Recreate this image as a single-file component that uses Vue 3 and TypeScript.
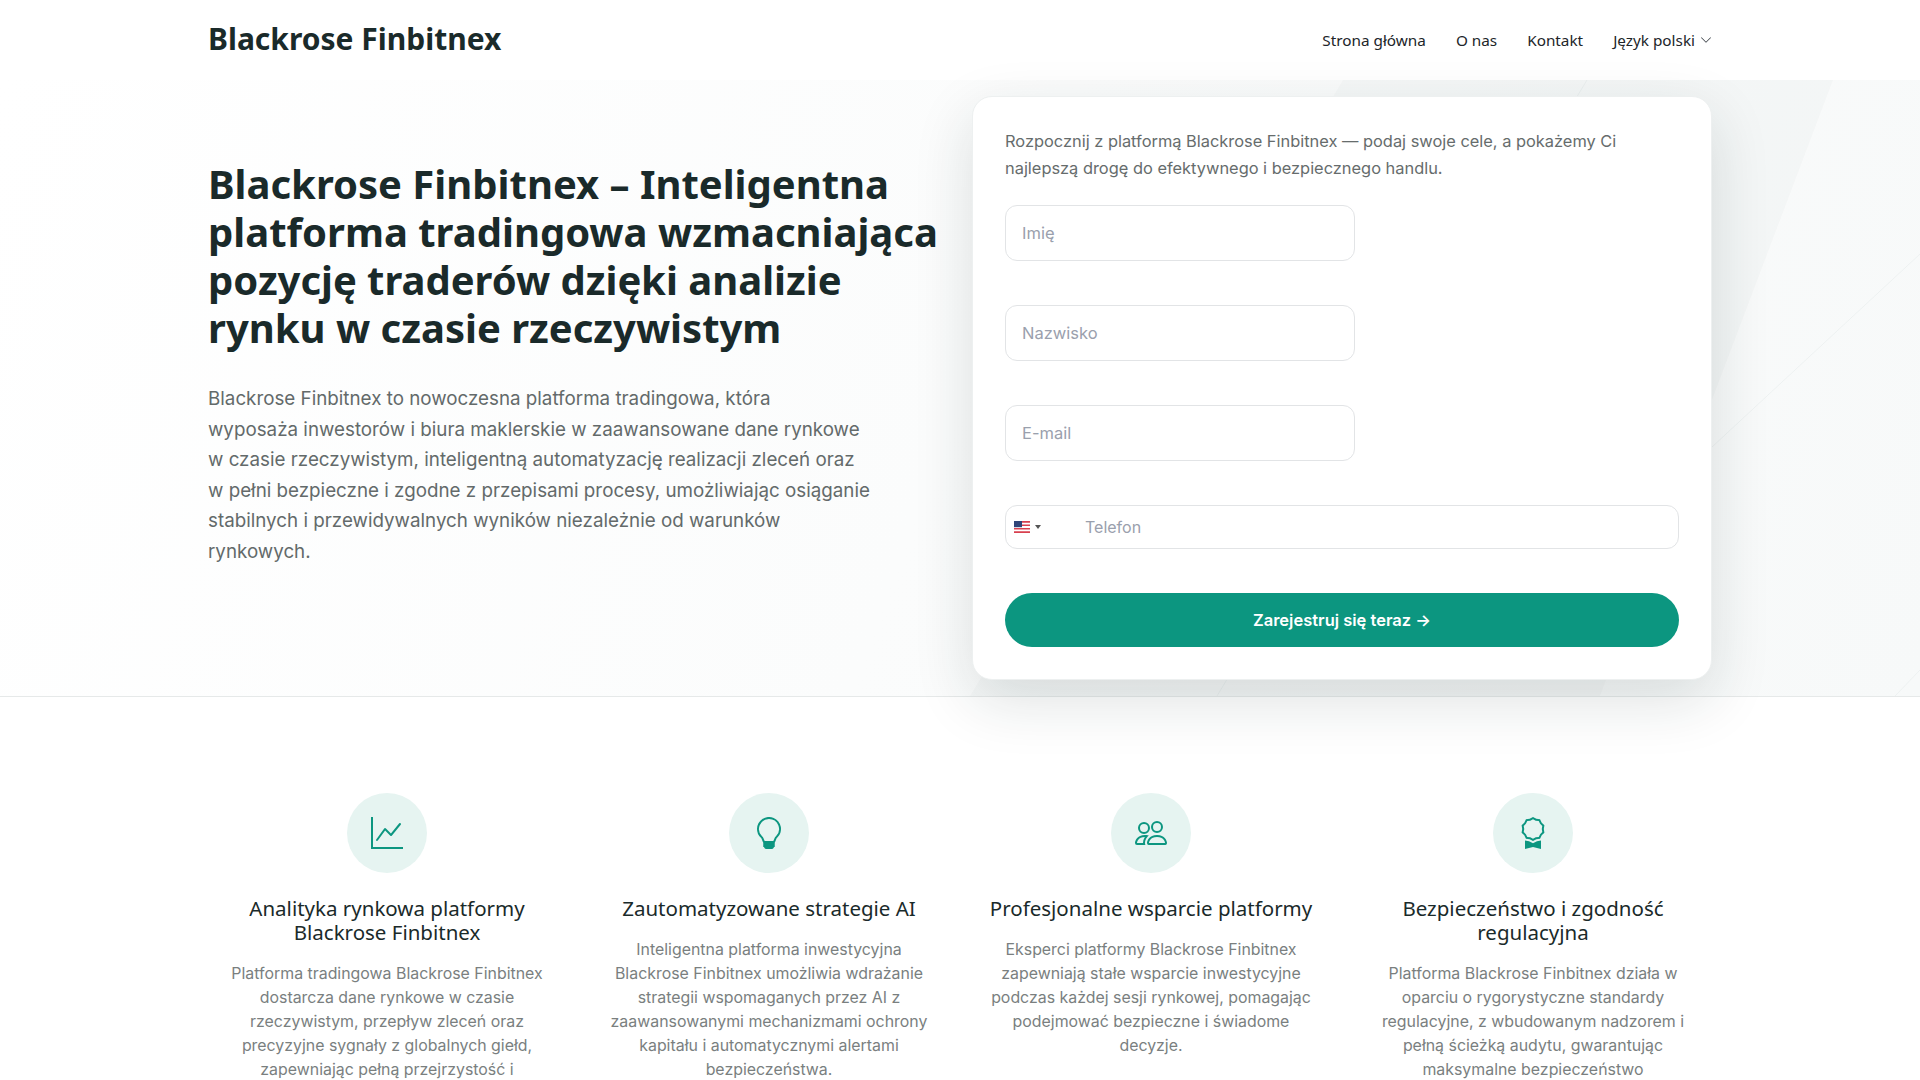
<script setup lang="ts">
interface Feature {
  icon: string;
  title: string[];
  lines: string[];
}

const navLinks = ["Strona główna", "O nas", "Kontakt"];

const leadLines = [
  "Blackrose Finbitnex to nowoczesna platforma tradingowa, która",
  "wyposaża inwestorów i biura maklerskie w zaawansowane dane rynkowe",
  "w czasie rzeczywistym, inteligentną automatyzację realizacji zleceń oraz",
  "w pełni bezpieczne i zgodne z przepisami procesy, umożliwiając osiąganie",
  "stabilnych i przewidywalnych wyników niezależnie od warunków",
  "rynkowych.",
];

const features: Feature[] = [
  {
    icon: "chart",
    title: ["Analityka rynkowa platformy", "Blackrose Finbitnex"],
    lines: [
      "Platforma tradingowa Blackrose Finbitnex",
      "dostarcza dane rynkowe w czasie",
      "rzeczywistym, przepływ zleceń oraz",
      "precyzyjne sygnały z globalnych giełd,",
      "zapewniając pełną przejrzystość i",
    ],
  },
  {
    icon: "bulb",
    title: ["Zautomatyzowane strategie AI"],
    lines: [
      "Inteligentna platforma inwestycyjna",
      "Blackrose Finbitnex umożliwia wdrażanie",
      "strategii wspomaganych przez AI z",
      "zaawansowanymi mechanizmami ochrony",
      "kapitału i automatycznymi alertami",
      "bezpieczeństwa.",
    ],
  },
  {
    icon: "people",
    title: ["Profesjonalne wsparcie platformy"],
    lines: [
      "Eksperci platformy Blackrose Finbitnex",
      "zapewniają stałe wsparcie inwestycyjne",
      "podczas każdej sesji rynkowej, pomagając",
      "podejmować bezpieczne i świadome",
      "decyzje.",
    ],
  },
  {
    icon: "award",
    title: ["Bezpieczeństwo i zgodność", "regulacyjna"],
    lines: [
      "Platforma Blackrose Finbitnex działa w",
      "oparciu o rygorystyczne standardy",
      "regulacyjne, z wbudowanym nadzorem i",
      "pełną ścieżką audytu, gwarantując",
      "maksymalne bezpieczeństwo",
    ],
  },
];
</script>

<template>
  <div class="page">
    <header class="site-header">
      <div class="container header-row">
        <a class="brand">Blackrose Finbitnex</a>
        <nav class="nav">
          <a v-for="link in navLinks" :key="link" class="nav-link">{{ link }}</a>
          <a class="nav-link lang">
            Język polski
            <svg width="12" height="12" viewBox="0 0 16 16" fill="#343a40">
              <path fill-rule="evenodd" d="M1.646 4.646a.5.5 0 0 1 .708 0L8 10.293l5.646-5.647a.5.5 0 0 1 .708.708l-6 6a.5.5 0 0 1-.708 0l-6-6a.5.5 0 0 1 0-.708" />
            </svg>
          </a>
        </nav>
      </div>
    </header>

    <section class="hero">
      <!-- faint diagonal shapes behind the form -->
      <svg class="hero-lines" viewBox="0 0 1920 616" preserveAspectRatio="none">
        <path d="M1343 0H1833L1600 616H970z" fill="#143c3c" opacity="0.018" />
        <path d="M1587 0L1217 616M1920 174L1712 367M1920 590L1895 616" fill="none" stroke="#143c3c" stroke-width="1" opacity="0.045" />
      </svg>
      <div class="container hero-row">
        <div class="hero-copy">
          <h1>Blackrose Finbitnex – Inteligentna platforma tradingowa wzmacniająca pozycję traderów dzięki analizie rynku w czasie rzeczywistym</h1>
          <p class="lead">
            <span v-for="line in leadLines" :key="line">{{ line }}</span>
          </p>
        </div>
        <form class="signup" @submit.prevent>
          <p class="signup-intro">
            Rozpocznij z platformą Blackrose Finbitnex — podaj swoje cele, a pokażemy Ci<br />najlepszą drogę do efektywnego i bezpiecznego handlu.
          </p>
          <input class="field" type="text" placeholder="Imię" />
          <input class="field" type="text" placeholder="Nazwisko" />
          <input class="field" type="email" placeholder="E-mail" />
          <div class="phone">
            <div class="flag-select">
              <svg class="flag" width="16" height="12" viewBox="0 0 16 12">
                <rect width="16" height="12" fill="#fff" />
                <path d="M0 0h16v1.700H0zM0 3.400h16v1.700H0zM0 6.900h16v1.700H0zM0 10.300h16V12H0z" fill="#d8404f" />
                <rect width="8" height="6.200" fill="#2f4478" />
              </svg>
              <span class="caret"></span>
            </div>
            <input class="phone-input" type="tel" placeholder="Telefon" />
          </div>
          <button class="submit" type="submit">Zarejestruj się teraz →</button>
        </form>
      </div>
    </section>

    <section class="features">
      <div class="container feature-grid">
        <article v-for="f in features" :key="f.icon" class="feature">
          <div class="feature-icon">
            <svg v-if="f.icon === 'chart'" width="32" height="32" viewBox="0 0 16 16" fill="#0c9680">
              <path fill-rule="evenodd" d="M0 0h1v15h15v1H0zm14.817 3.113a.5.5 0 0 1 .07.704l-4.5 5.500a.5.5 0 0 1-.74.037L7.060 6.767l-3.656 5.027a.5.5 0 0 1-.808-.588l4-5.500a.5.5 0 0 1 .758-.06l2.609 2.610 4.150-5.073a.5.5 0 0 1 .704-.07" />
            </svg>
            <svg v-else-if="f.icon === 'bulb'" width="32" height="32" viewBox="0 0 16 16" fill="#0c9680">
              <path d="M2 6a6 6 0 1 1 10.174 4.310c-.203.196-.359.4-.453.619l-.762 1.769A.5.5 0 0 1 10.500 13a.5.5 0 0 1 0 1 .5.5 0 0 1 0 1l-.224.447a1 1 0 0 1-.894.553H6.618a1 1 0 0 1-.894-.553L5.500 15a.5.5 0 0 1 0-1 .5.5 0 0 1 0-1 .5.5 0 0 1-.46-.302l-.761-1.770a2 2 0 0 0-.453-.618A5.980 5.980 0 0 1 2 6m6-5a5 5 0 0 0-3.479 8.592c.263.254.514.564.676.941L5.830 12h4.342l.632-1.467c.162-.377.413-.687.676-.941A5 5 0 0 0 8 1" />
            </svg>
            <svg v-else-if="f.icon === 'people'" width="32" height="32" viewBox="0 0 16 16" fill="#0c9680">
              <path d="M15 14s1 0 1-1-1-4-5-4-5 3-5 4 1 1 1 1zm-7.978-1L7 12.996c.001-.264.167-1.030.76-1.720C8.312 10.629 9.282 10 11 10c1.717 0 2.687.63 3.240 1.276.593.69.758 1.457.76 1.720l-.008.002-.014.002zM11 7a2 2 0 1 0 0-4 2 2 0 0 0 0 4m3-2a3 3 0 1 1-6 0 3 3 0 0 1 6 0M6.936 9.280a6 6 0 0 0-1.230-.247A7 7 0 0 0 5 9c-4 0-5 3-5 4q0 1 1 1h4.216A2.240 2.240 0 0 1 5 13c0-1.010.377-2.042 1.090-2.904.243-.294.526-.569.846-.816M4.920 10A5.500 5.500 0 0 0 4 13H1c0-.26.164-1.030.76-1.724.545-.636 1.492-1.256 3.160-1.275ZM1.500 5.500a3 3 0 1 1 6 0 3 3 0 0 1-6 0m3-2a2 2 0 1 0 0 4 2 2 0 0 0 0-4" />
            </svg>
            <svg v-else width="32" height="32" viewBox="0 0 16 16" fill="#0c9680">
              <path d="M9.669.864 8 0 6.331.864l-1.858.282-.842 1.680-1.337 1.320L2.600 6l-.306 1.854 1.337 1.320.842 1.680 1.858.282L8 12l1.669-.864 1.858-.282.842-1.680 1.337-1.320L13.400 6l.306-1.854-1.337-1.320-.842-1.680zm1.196 1.193.684 1.365 1.086 1.072L12.387 6l.248 1.506-1.086 1.072-.684 1.365-1.510.229L8 10.874l-1.355-.702-1.510-.229-.684-1.365-1.086-1.072L3.614 6l-.25-1.506 1.087-1.072.684-1.365 1.510-.229L8 1.126l1.355.702z" />
              <path d="M4 11.794V16l4-1 4 1v-4.206l-2.018.306L8 13.126 6.018 12.100z" />
            </svg>
          </div>
          <h3>
            <span v-for="t in f.title" :key="t">{{ t }}</span>
          </h3>
          <p>
            <span v-for="l in f.lines" :key="l">{{ l }}</span>
          </p>
        </article>
      </div>
    </section>
  </div>
</template>

<style>
html,
body {
  margin: 0;
  background: #fff;
}
</style>

<style scoped>
.page {
  height: 1080px;
  overflow: hidden;
  font-family: "Inter", "Liberation Sans", sans-serif;
}
.container {
  width: 1504px;
  margin: 0 auto;
}
.site-header {
  height: 80px;
  background: #fff;
}
.header-row {
  height: 100%;
  display: flex;
  align-items: center;
  justify-content: space-between;
}
.brand {
  font-family: "Noto Sans", sans-serif;
  font-weight: 700;
  font-size: 30px;
  line-height: 38px;
  margin-top: -2px;
  color: #1a2a2a;
}
.nav {
  display: flex;
  gap: 30px;
}
.nav-link {
  font-family: "Noto Sans", sans-serif;
  font-size: 15.300px;
  color: #212529;
  line-height: 24px;
}
.lang {
  display: flex;
  align-items: center;
  gap: 5px;
}
.hero {
  position: relative;
  height: 617px;
  box-sizing: border-box;
  border-bottom: 1px solid #e6e9e9;
  background: linear-gradient(110deg, #ffffff 0%, #fbfcfc 50%, #f7f9f9 100%);
}
.hero-lines {
  position: absolute;
  inset: 0;
  width: 100%;
  height: 616px;
}
.hero-row {
  position: relative;
  display: flex;
  justify-content: space-between;
  align-items: flex-start;
  padding-top: 16px;
}
.hero-copy {
  width: 740px;
  padding-top: 64px;
}
h1 {
  margin: 0;
  font-family: "Noto Sans", sans-serif;
  font-weight: 700;
  font-size: 40px;
  line-height: 48px;
  color: #1a2a2a;
}
.lead {
  margin: 32px 0 0;
  font-size: 18.800px;
  line-height: 30.600px;
  color: #636a6a;
}
.lead span,
.feature p span,
.feature h3 span {
  display: block;
}
.signup {
  width: 740px;
  height: 584px;
  box-sizing: border-box;
  padding: 31px 32px 32px;
  background: #fff;
  border: 1px solid #edf0f0;
  border-radius: 20px;
  box-shadow: 0 20px 60px rgba(20, 40, 40, 0.14);
  display: flex;
  flex-direction: column;
  align-items: flex-start;
}
.signup-intro {
  margin: 0 0 24px;
  font-size: 16.400px;
  line-height: 26.500px;
  color: #666c6c;
}
.field {
  width: 350px;
  height: 56px;
  box-sizing: border-box;
  margin-bottom: 44px;
  padding: 0 16px;
  border: 1px solid #e2e4e6;
  border-radius: 12px;
  font: 16.500px "Inter", sans-serif;
  outline: none;
}
.field::placeholder,
.phone-input::placeholder {
  color: #9aa0ad;
}
.phone {
  width: 674px;
  height: 44px;
  box-sizing: border-box;
  display: flex;
  align-items: center;
  border: 1px solid #e2e4e6;
  border-radius: 12px;
}
.flag-select {
  width: 77px;
  padding-left: 8px;
  box-sizing: border-box;
  display: flex;
  align-items: center;
  gap: 5px;
}
.flag {
  display: block;
  width: 16px;
  height: 12px;
}
.caret {
  width: 0;
  height: 0;
  border-left: 3px solid transparent;
  border-right: 3px solid transparent;
  border-top: 4px solid #555;
}
.phone-input {
  flex: 1;
  border: 0;
  background: none;
  outline: none;
  font: 16px "Inter", sans-serif;
}
.submit {
  margin-top: 44px;
  width: 674px;
  height: 54px;
  border: 0;
  border-radius: 27px;
  background: #0c9680;
  color: #fff;
  font: 600 16.500px "Inter", sans-serif;
}
.features {
  padding-top: 96px;
}
.feature-grid {
  display: grid;
  grid-template-columns: repeat(4, 358px);
  column-gap: 24px;
}
.feature {
  text-align: center;
}
.feature-icon {
  width: 80px;
  height: 80px;
  margin: 0 auto 23px;
  border-radius: 50%;
  background: #e6f4f1;
  display: flex;
  align-items: center;
  justify-content: center;
}
.feature h3 {
  margin: 0 0 18px;
  font-family: "Noto Sans", sans-serif;
  font-weight: 400;
  font-size: 20.500px;
  line-height: 24px;
  color: #1a2a2a;
}
.feature p {
  margin: 0;
  font-size: 15.900px;
  line-height: 24.100px;
  color: #7a7f7f;
}
</style>
